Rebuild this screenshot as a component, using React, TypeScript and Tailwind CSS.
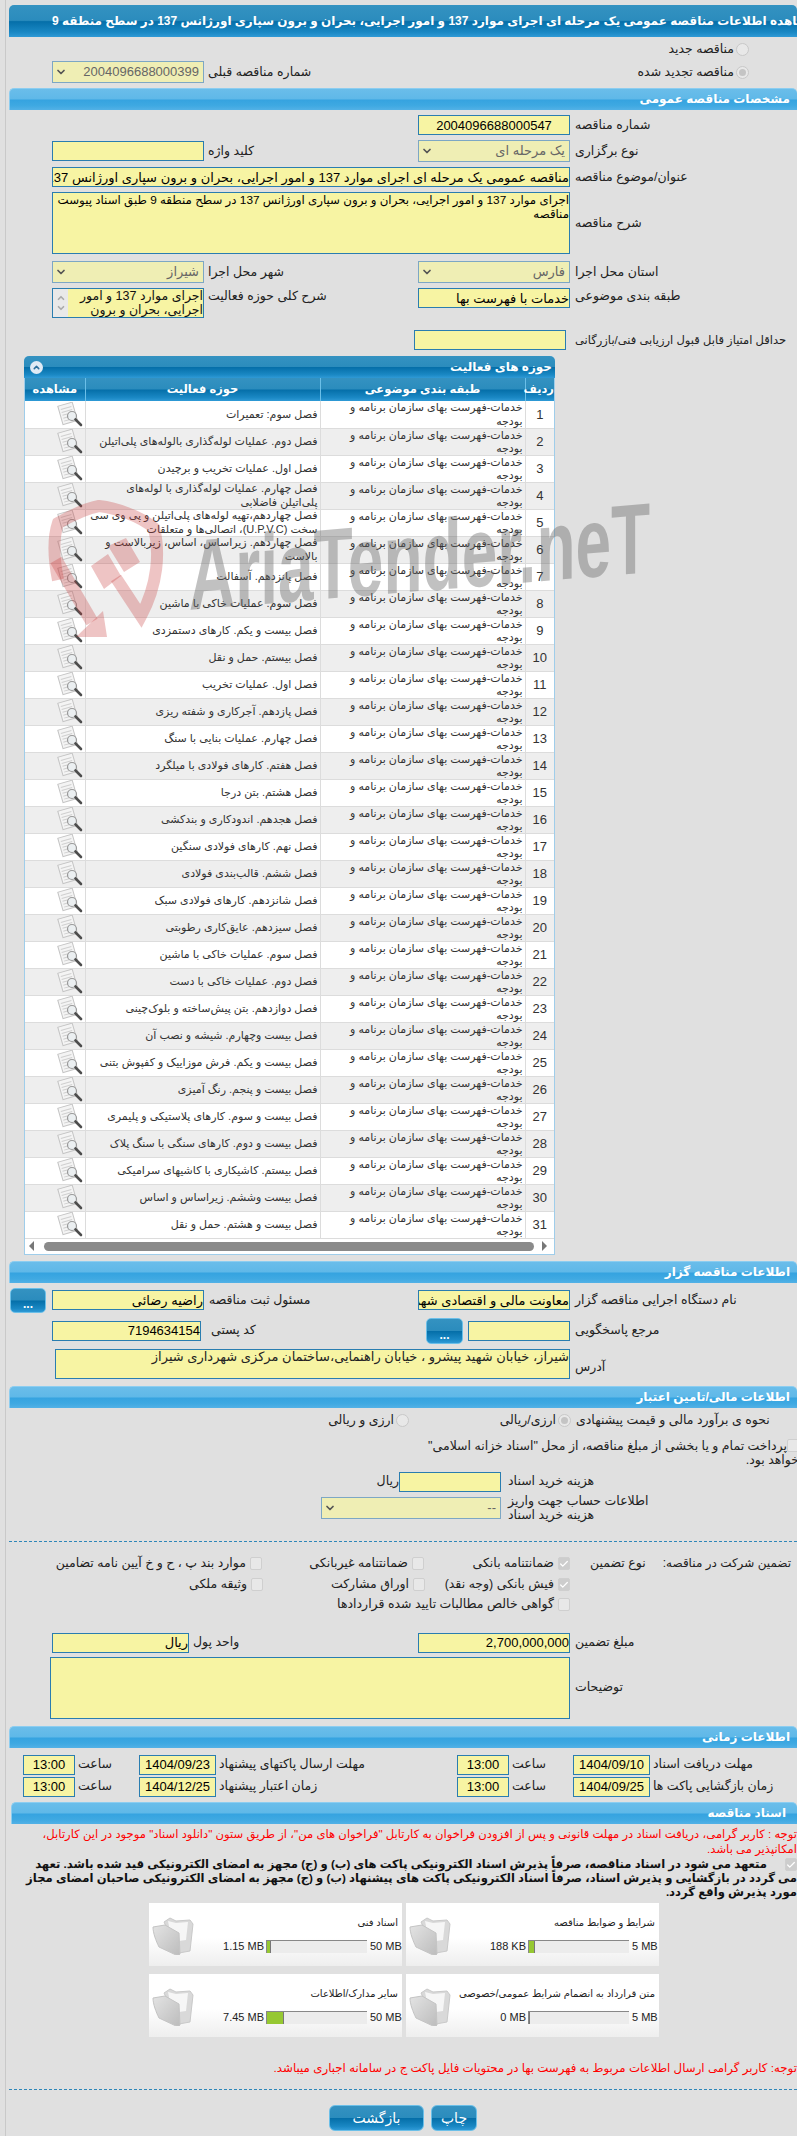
import React from "react";
import { ChevronDown, Check, ChevronUp } from "lucide-react";

const activities = [
  "فصل سوم: تعمیرات",
  "فصل دوم. عملیات لوله‌گذاری بالوله‌های پلی‌اتیلن",
  "فصل اول. عملیات تخریب و برچیدن",
  "فصل چهارم. عملیات لوله‌گذاری با لوله‌های پلی‌اتیلن فاضلابی",
  "فصل چهاردهم،تهیه لوله‌های پلی‌اتیلن و پی وی سی سخت (U.P.V.C)، اتصالی‌ها و متعلقات",
  "فصل چهاردهم. زیراساس، اساس، زیربالاست  و بالاست",
  "فصل پانزدهم. آسفالت",
  "فصل سوم. عملیات خاکی با ماشین",
  "فصل بیست و یکم. کارهای دستمزدی",
  "فصل بیستم. حمل و نقل",
  "فصل اول. عملیات تخریب",
  "فصل پازدهم. آجرکاری و شفته ریزی",
  "فصل چهارم. عملیات بنایی با سنگ",
  "فصل هفتم. کارهای فولادی با میلگرد",
  "فصل هشتم. بتن درجا",
  "فصل هجدهم. اندودکاری و بندکشی",
  "فصل نهم. کارهای فولادی سنگین",
  "فصل ششم. قالب‌بندی فولادی",
  "فصل شانزدهم. کارهای فولادی سبک",
  "فصل سیزدهم. عایق‌کاری رطوبتی",
  "فصل سوم. عملیات خاکی با ماشین",
  "فصل دوم. عملیات خاکی با دست",
  "فصل دوازدهم. بتن پیش‌ساخته و بلوک‌چینی",
  "فصل بیست وچهارم. شیشه و نصب آن",
  "فصل بیست و یکم. فرش موزاییک و کفپوش بتنی",
  "فصل بیست و پنجم. رنگ آمیزی",
  "فصل بیست و سوم. کارهای پلاستیکی و پلیمری",
  "فصل بیست و دوم. کارهای سنگی با سنگ پلاک",
  "فصل بیستم. کاشیکاری با کاشیهای سرامیکی",
  "فصل بیست وششم. زیراساس و اساس",
  "فصل بیست و هشتم. حمل و نقل",
];

const darkGrad =
  "bg-[linear-gradient(to_bottom,#3492c1_0%,#2b8cbd_48%,#056fa9_52%,#1a88c4_85%,#2f9ad6_100%)]";
const lightGrad =
  "bg-[linear-gradient(to_bottom,#6abdea_0%,#5fb8e8_48%,#35a3e0_52%,#3fa9e2_80%,#52b1e6_100%)]";

function Inp({ w, value = "", className = "" }: { w: string; value?: string; className?: string }) {
  return (
    <input
      readOnly
      dir="rtl"
      value={value}
      className={`${w} h-[20px] shrink-0 border border-[#2a7db0] bg-[#f7f4a3] px-0 text-[13px] leading-[18px] text-black outline-none ${className}`}
    />
  );
}

function Sel({ w, value }: { w: string; value: string }) {
  return (
    <div className={`${w} relative flex h-[22px] shrink-0 items-center justify-end border border-[#7da7c4] bg-[#efeeb4] pr-[4px] text-[13px] text-[#666]`}>
      <ChevronDown className="absolute left-[2px] top-[4px] text-[#555]" size={12} strokeWidth={3.5} />
      <span dir="rtl">{value}</span>
    </div>
  );
}

function Lbl({ children, className = "" }: { children: React.ReactNode; className?: string }) {
  return (
    <span dir="rtl" className={`whitespace-nowrap text-left text-[12.5px] leading-[15px] text-[#222] ${className}`}>
      {children}
    </span>
  );
}

function Radio({ on = false }: { on?: boolean }) {
  return (
    <span className="flex h-[13px] w-[13px] shrink-0 items-center justify-center rounded-full border border-[#c8c8c8] bg-[#e8e8e8]">
      {on && <span className="h-[7px] w-[7px] rounded-full bg-[#c4c4c4]" />}
    </span>
  );
}

function Cb({ on = false }: { on?: boolean }) {
  return (
    <span className={`flex h-[13px] w-[12px] shrink-0 items-center justify-center rounded-[2px] border border-[#cfcfcf] ${on ? "bg-[#cdcdcd]" : "bg-[#e8e8e8]"}`}>
      {on && <Check size={10} strokeWidth={3} className="text-white" />}
    </span>
  );
}

function Bar({ title, className = "ml-[3px]" }: { title: string; className?: string }) {
  return (
    <div className={`${className} ${lightGrad} flex h-[22px] justify-end rounded-t-[5px] border-l border-t border-[#8ccdf0] pr-[7px]`}>
      <span dir="rtl" className="text-[12px] font-bold leading-[21px] text-white">{title}</span>
    </div>
  );
}

function Dots({ className = "" }: { className?: string }) {
  return (
    <div className={`${darkGrad} flex w-[36px] shrink-0 items-end justify-center rounded-[5px] border border-[#6bbfe8] pb-[3px] text-[12px] font-bold leading-[10px] text-white ${className}`}>
      ...
    </div>
  );
}

function DocIcon() {
  return (
    <svg width="26" height="25" viewBox="0 0 26 25" className="block">
      <g transform="rotate(-16 10 11)">
        <rect x="3" y="2" width="15" height="19" fill="#f4f4f4" stroke="#c4c4c4" strokeWidth="1" />
        <path d="M5 6h11M5 9h11M5 12h7M5 15h6M5 18h8" stroke="#cfcfcf" strokeWidth="1" />
      </g>
      <circle cx="15" cy="14" r="4.5" fill="#e9eef0" fillOpacity="0.8" stroke="#999" strokeWidth="1.2" />
      <path d="M18.5 17.5L24 23" stroke="#4d4d4d" strokeWidth="2.6" strokeLinecap="round" />
    </svg>
  );
}

function Folder() {
  return (
    <svg width="42" height="38" viewBox="0 0 42 38" className="block shrink-0">
      <defs>
        <linearGradient id="fg" x1="0" y1="0" x2="1" y2="1">
          <stop offset="0" stopColor="#e4e4e4" />
          <stop offset="1" stopColor="#bcbcbc" />
        </linearGradient>
      </defs>
      <path d="M12 5L18 1l6 3 14-1 3 4-3 27-11 2z" fill="#d9d9d9" stroke="#c9c9c9" />
      <path d="M16 4l8 2 12-1-2 18-14 2z" fill="#f6f6f6" />
      <path d="M1 10l12-2 14 8 1 21-1 1-3 0L7 30C4 24 1 16 1 10z" fill="url(#fg)" stroke="#c4c4c4" />
    </svg>
  );
}

function Card({ title, size, max, fill, maxW }: { title: string; size: string; max: string; fill: number; maxW: string }) {
  return (
    <div className="flex h-[63px] bg-[linear-gradient(to_bottom,#ffffff_55%,#eeeeee_100%)] pl-[3px] pt-[14px]">
      <Folder />
      <div className="min-w-0 flex-1 pr-[4px]">
        <div dir="rtl" className="whitespace-nowrap text-[10px] leading-[12px] text-[#222]">{title}</div>
        <div className="mt-[11px] flex h-[13px] items-center justify-end">
          <span className="mr-[2px] whitespace-nowrap text-[11px] leading-[13px] text-[#222]">{size}</span>
          <div className="flex h-[13px] w-[101px] border-l border-t border-[#888] bg-[#ececec]">
            <div className="h-full bg-[#96c832]" style={{ width: fill }} />
            <div className="h-full w-px bg-[#777]" />
          </div>
          <span className={`ml-[3px] whitespace-nowrap text-[11px] leading-[13px] text-[#222] ${maxW}`}>{max}</span>
        </div>
      </div>
    </div>
  );
}

function TimeCell({ label, value, w, cell }: { label: string; value: string; w: string; cell: string }) {
  return (
    <div className={`${cell} flex shrink-0 items-center`}>
      <input readOnly value={value} className={`${w} h-[20px] border border-[#2a7db0] bg-[#f7f4a3] text-center text-[13px] text-black outline-none`} />
      <Lbl className="ml-[3px]">{label}</Lbl>
    </div>
  );
}

export default function App() {
  return (
    <div className="relative h-[2136px] w-[797px] overflow-hidden bg-[#e0e0e0] font-['Liberation_Sans','DejaVu_Sans',sans-serif]">
      <div className="ml-[5px] h-full border-l border-[#c9c9c9] pt-[5px]">
        {/* page title */}
        <div className={`${darkGrad} ml-[3px] flex h-[32px] items-center overflow-hidden rounded-t-[5px] pl-[43px]`}>
          <span dir="rtl" className="whitespace-nowrap text-[12px] font-bold text-white">
            مشاهده اطلاعات مناقصه عمومی یک مرحله ای اجرای موارد 137 و امور اجرایی، بحران و برون سپاری اورژانس 137 در سطح منطقه 9
          </span>
        </div>

        <div className="mt-[3px] flex h-[18px] items-center justify-end gap-[2px] pr-[48px]">
          <Lbl>مناقصه جدید</Lbl>
          <Radio />
        </div>
        <div className="mt-[3px] flex h-[22px] items-center pl-[46px] pr-[48px]">
          <Sel w="w-[152px]" value="2004096688000399" />
          <Lbl className="ml-[4px]">شماره مناقصه قبلی</Lbl>
          <div className="ml-auto flex items-center gap-[2px]">
            <Lbl>مناقصه تجدید شده</Lbl>
            <Radio on />
          </div>
        </div>

        <Bar title="مشخصات مناقصه عمومی" className="ml-[3px] mt-[5px]" />

        <div className="mt-[5px] flex h-[20px] items-center pl-[412px]">
          <Inp w="w-[152px]" value="2004096688000547" className="text-center" />
          <Lbl className="ml-[5px]">شماره مناقصه</Lbl>
        </div>
        <div className="mt-[5px] flex h-[22px] items-center pl-[46px]">
          <div className="flex w-[366px] items-center">
            <Inp w="w-[152px]" />
            <Lbl className="ml-[4px]">کلید واژه</Lbl>
          </div>
          <Sel w="w-[152px]" value="یک مرحله ای" />
          <Lbl className="ml-[5px]">نوع برگزاری</Lbl>
        </div>
        <div className="mt-[5px] flex h-[20px] items-center pl-[46px]">
          <Inp w="w-[518px]" value="مناقصه عمومی یک مرحله ای اجرای موارد 137 و امور اجرایی، بحران و برون سپاری اورژانس 137 در سطح منطقه 9" />
          <Lbl className="ml-[5px]">عنوان/موضوع مناقصه</Lbl>
        </div>
        <div className="mt-[5px] flex h-[62px] items-center pl-[46px]">
          <textarea
            readOnly
            dir="rtl"
            value="اجرای موارد 137 و امور اجرایی، بحران و برون سپاری اورژانس 137 در سطح منطقه 9 طبق اسناد پیوست مناقصه"
            className="h-[62px] w-[518px] resize-none border border-[#2a7db0] bg-[#f7f4a3] text-[11.8px] leading-[14px] text-black outline-none"
          />
          <Lbl className="ml-[5px]">شرح مناقصه</Lbl>
        </div>
        <div className="mt-[7px] flex h-[22px] items-center pl-[46px]">
          <div className="flex w-[366px] items-center">
            <Sel w="w-[152px]" value="شیراز" />
            <Lbl className="ml-[4px]">شهر محل اجرا</Lbl>
          </div>
          <Sel w="w-[152px]" value="فارس" />
          <Lbl className="ml-[5px]">استان محل اجرا</Lbl>
        </div>
        <div className="mt-[5px] flex h-[30px] items-start pl-[46px]">
          <div className="flex w-[366px] items-start">
            <div className="flex h-[30px] w-[152px] shrink-0 border border-[#2a7db0] bg-[#f7f4a3]">
              <div className="flex h-full w-[15px] flex-col items-center justify-center bg-[#e9e9e9] text-[#aaa]">
                <ChevronUp size={10} strokeWidth={4} />
                <ChevronDown size={10} strokeWidth={4} />
              </div>
              <div dir="rtl" className="flex-1 overflow-hidden text-[12.5px] leading-[14px] text-[#111]">
                اجرای موارد 137 و امور اجرایی، بحران و برون
              </div>
            </div>
            <Lbl className="ml-[4px] mt-[1px]">شرح کلی حوزه فعالیت</Lbl>
          </div>
          <Inp w="w-[152px]" value="خدمات با فهرست بها" />
          <Lbl className="ml-[5px] mt-[1px]">طبقه بندی موضوعی</Lbl>
        </div>
        <div className="mt-[12px] flex h-[20px] items-center pl-[408px]">
          <Inp w="w-[152px]" />
          <Lbl className="ml-[9px] !text-[11.5px]">حداقل امتیاز قابل قبول ارزیابی فنی/بازرگانی</Lbl>
        </div>

        {/* activities panel */}
        <div className="ml-[18px] mt-[6px] w-[531px] rounded-t-[5px] border-x border-b border-[#9fcdea] bg-white">
          <div className={`${darkGrad} -mx-px flex h-[22px] items-center justify-between rounded-t-[5px] pl-[6px] pr-[3px]`}>
            <span className="flex h-[13px] w-[13px] items-center justify-center rounded-full bg-[#dfeaf5]">
              <ChevronUp size={9} strokeWidth={4} className="text-[#2a6e9c]" />
            </span>
            <span dir="rtl" className="text-[12px] font-bold text-white">حوزه های فعالیت</span>
          </div>
          <table className="w-[529px] table-fixed border-collapse text-[11px] leading-[13.5px] text-[#333]" dir="rtl">
            <colgroup>
              <col className="w-[29px]" />
              <col className="w-[205px]" />
              <col className="w-[235px]" />
              <col className="w-[60px]" />
            </colgroup>
            <thead>
              <tr className={`${darkGrad} h-[23px] text-[11.5px] font-bold text-white`}>
                {["ردیف", "طبقه بندی موضوعی", "حوزه فعالیت", "مشاهده"].map((h) => (
                  <th key={h} className="whitespace-nowrap border-l border-[#6bbfe8] p-0 font-bold last:border-l-0">{h}</th>
                ))}
              </tr>
            </thead>
            <tbody>
              {activities.map((a, i) => (
                <tr key={i} className={`h-[27px] border-b border-[#dcdcdc] ${i % 2 ? "bg-[#eeeeee]" : "bg-white"}`}>
                  <td className="border-l border-[#dcdcdc] p-0 text-center text-[13px]">{i + 1}</td>
                  <td className="border-l border-[#dcdcdc] p-0 px-[2px]"><div className="h-[26px] overflow-visible">خدمات-فهرست بهای سازمان برنامه و بودجه</div></td>
                  <td className="border-l border-[#dcdcdc] p-0 px-[2px]"><div className="flex h-[26px] items-center overflow-visible">{a}</div></td>
                  <td className="p-0"><div className="flex justify-end pr-[1px]" dir="ltr"><div className="mr-[1px]"><DocIcon /></div></div></td>
                </tr>
              ))}
            </tbody>
          </table>
          <div className="flex h-[15px] items-center px-[4px]">
            <span className="h-0 w-0 border-y-[5px] border-r-[5px] border-y-transparent border-r-[#777]" />
            <span className="ml-[10px] h-[9px] w-[490px] rounded-full bg-[#8a8a8a]" />
            <span className="ml-[8px] h-0 w-0 border-y-[5px] border-l-[5px] border-y-transparent border-l-[#777]" />
          </div>
        </div>

        <Bar title="اطلاعات مناقصه گزار" className="ml-[3px] mt-[6px]" />

        <div className="mt-[5px] flex h-[25px] items-center pl-[4px]">
          <Dots className="h-[25px]" />
          <div className="ml-[6px] flex w-[366px] items-center">
            <Inp w="w-[152px]" value="راضیه رضائی" />
            <Lbl className="ml-[5px]">مسئول ثبت مناقصه</Lbl>
          </div>
          <Inp w="w-[152px]" value="معاونت مالی و اقتصادی شهرداری شیراز" />
          <Lbl className="ml-[5px]">نام دستگاه اجرایی مناقصه گزار</Lbl>
        </div>
        <div className="mt-[5px] flex h-[26px] items-center pl-[46px]">
          <div className="flex w-[374px] items-center">
            <Inp w="w-[149px]" value="7194634154" />
            <Lbl className="ml-[10px]">کد پستی</Lbl>
          </div>
          <Dots className="h-[26px] w-[37px]" />
          <Inp w="w-[102px]" className="ml-[5px]" />
          <Lbl className="ml-[5px]">مرجع پاسخگویی</Lbl>
        </div>
        <div className="mt-[5px] flex h-[30px] items-center pl-[49px]">
          <textarea
            readOnly
            dir="rtl"
            value="شیراز، خیابان شهید پیشرو ، خیابان راهنمایی،ساختمان مرکزی شهرداری شیراز"
            className="h-[30px] w-[515px] resize-none border border-[#2a7db0] bg-[#f7f4a3] text-[13px] leading-[14px] text-[#222] outline-none"
          />
          <Lbl className="ml-[5px] mt-[7px]">آدرس</Lbl>
        </div>

        <Bar title="اطلاعات مالی/تامین اعتبار" className="ml-[3px] mt-[7px]" />

        <div className="mt-[4px] flex h-[18px] items-center pl-[327px]">
          <Lbl className="w-[61px]">ارزی و ریالی</Lbl>
          <span className="ml-[2px]"><Radio /></span>
          <Lbl className="ml-[93px] w-[54px]">ارزی/ریالی</Lbl>
          <span className="ml-[2px]"><Radio on /></span>
          <Lbl className="ml-[5px]">نحوه ی برآورد مالی و قیمت پیشنهادی</Lbl>
        </div>
        <div dir="rtl" className="ml-[294px] mt-[9px] w-[499px] text-[12.5px] leading-[14px] text-[#222]">
          <span className="inline-block align-[-2px]"><Cb /></span>
          پرداخت تمام و یا بخشی از مبلغ مناقصه، از محل "اسناد خزانه اسلامی"
          <br />
          خواهد بود.
        </div>
        <div className="mt-[5px] flex h-[20px] items-center pl-[374px]">
          <Lbl className="w-[19px]">ریال</Lbl>
          <Inp w="w-[102px]" />
          <Lbl className="ml-[7px]">هزینه خرید اسناد</Lbl>
        </div>
        <div className="mt-[5px] flex h-[22px] items-center pl-[315px]">
          <Sel w="w-[180px]" value="--" />
          <span dir="rtl" className="ml-[7px] w-[170px] text-left text-[12.5px] leading-[14px] text-[#222]">اطلاعات حساب جهت واریز هزینه خرید اسناد</span>
        </div>

        <div className="ml-[3px] mt-[22px] border-t border-dashed border-[#2e86b8]" />

        <div className="mt-[14px] flex h-[16px] items-center pl-[54px]">
          <div className="flex w-[202px] items-center justify-end gap-[4px]"><Lbl>موارد بند پ ، ح و خ آیین نامه تضامین</Lbl><Cb /></div>
          <div className="flex w-[162px] items-center justify-end gap-[4px]"><Lbl>ضمانتنامه غیربانکی</Lbl><Cb /></div>
          <div className="flex w-[146px] items-center justify-end gap-[4px]"><Lbl>ضمانتنامه بانکی</Lbl><Cb on /></div>
          <Lbl className="ml-[20px]">نوع تضمین</Lbl>
          <Lbl className="ml-[17px] !text-[12px]">تضمین شرکت در مناقصه:</Lbl>
        </div>
        <div className="mt-[5px] flex h-[16px] items-center pl-[54px]">
          <div className="flex w-[203px] items-center justify-end gap-[4px]"><Lbl>وثیقه ملکی</Lbl><Cb /></div>
          <div className="flex w-[162px] items-center justify-end gap-[4px]"><Lbl>اوراق مشارکت</Lbl><Cb /></div>
          <div className="flex w-[145px] items-center justify-end gap-[4px]"><Lbl>فیش بانکی (وجه نقد)</Lbl><Cb on /></div>
        </div>
        <div className="mt-[4px] flex h-[16px] items-center pl-[252px]">
          <div className="flex w-[312px] items-center justify-end gap-[4px]"><Lbl>گواهی خالص مطالبات تایید شده قراردادها</Lbl><Cb /></div>
        </div>

        <div className="mt-[20px] flex h-[20px] items-center pl-[46px]">
          <div className="flex w-[366px] items-center">
            <Inp w="w-[137px]" value="ریال" />
            <Lbl className="ml-[4px]">واحد پول</Lbl>
          </div>
          <Inp w="w-[152px]" value="2,700,000,000" />
          <Lbl className="ml-[5px]">مبلغ تضمین</Lbl>
        </div>
        <div className="mt-[4px] flex h-[62px] items-center pl-[44px]">
          <textarea readOnly className="h-[62px] w-[520px] resize-none border border-[#2a7db0] bg-[#f7f4a3] outline-none" />
          <Lbl className="ml-[5px]">توضیحات</Lbl>
        </div>

        <Bar title="اطلاعات زمانی" className="ml-[3px] mt-[7px]" />

        <div className="mt-[7px] flex h-[20px] pl-[17px]">
          <TimeCell cell="w-[116px]" w="w-[52px]" label="ساعت" value="13:00" />
          <TimeCell cell="w-[318px]" w="w-[77px]" label="مهلت ارسال پاکتهای پیشنهاد" value="1404/09/23" />
          <TimeCell cell="w-[116px]" w="w-[52px]" label="ساعت" value="13:00" />
          <TimeCell cell="w-[200px]" w="w-[77px]" label="مهلت دریافت اسناد" value="1404/09/10" />
        </div>
        <div className="mt-[2px] flex h-[20px] pl-[17px]">
          <TimeCell cell="w-[116px]" w="w-[52px]" label="ساعت" value="13:00" />
          <TimeCell cell="w-[318px]" w="w-[77px]" label="زمان اعتبار پیشنهاد" value="1404/12/25" />
          <TimeCell cell="w-[116px]" w="w-[52px]" label="ساعت" value="13:00" />
          <TimeCell cell="w-[200px]" w="w-[77px]" label="زمان بازگشایی پاکت ها" value="1404/09/25" />
        </div>

        <Bar title="اسناد مناقصه" className="ml-[5px] mt-[5px] !pr-[11px]" />

        <div dir="rtl" className="ml-[20px] mt-[2px] w-[771px] whitespace-nowrap text-[11.6px] leading-[15px] text-[#f00]">
          توجه : کاربر گرامی، دریافت اسناد در مهلت قانونی و پس از افزودن فراخوان به کارتابل "فراخوان های من"، از طریق ستون "دانلود اسناد" موجود در این کارتابل،
          <br />
          امکانپذیر می باشد.
        </div>
        <div dir="rtl" className="ml-[4px] mt-[1px] w-[787px] whitespace-nowrap text-[11.6px] font-bold leading-[14px] text-[#111]">
          <span className="ml-[18px] inline-block align-[-2px]"><Cb on /></span>
          متعهد می شود در اسناد مناقصه، صرفاً پذیرش اسناد الکترونیکی پاکت های (ب) و (ج) مجهز به امضای الکترونیکی قید شده باشد. تعهد
          <br />
          می گردد در بازگشایی و پذیرش اسناد، صرفاً اسناد الکترونیکی پاکت های پیشنهاد (ب) و (ج) مجهز به امضای الکترونیکی صاحبان امضای مجاز
          <br />
          مورد پذیرش واقع گردد.
        </div>

        <div className="ml-[143px] mt-[4px] grid w-[510px] grid-cols-2 gap-x-[4px] gap-y-[8px]">
          <Card title="اسناد فنی" size="1.15 MB" max="50 MB" fill={3} maxW="w-[28px]" />
          <Card title="شرایط و ضوابط مناقصه" size="188 KB" max="5 MB" fill={5} maxW="w-[23px]" />
          <Card title="سایر مدارک/اطلاعات" size="7.45 MB" max="50 MB" fill={16} maxW="w-[28px]" />
          <Card title="متن قرارداد به انضمام شرایط عمومی/خصوصی" size="0 MB" max="5 MB" fill={0} maxW="w-[23px]" />
        </div>

        <div dir="rtl" className="ml-[260px] mt-[24px] w-[531px] whitespace-nowrap text-[11.8px] leading-[14px] text-[#f00]">
          توجه: کاربر گرامی ارسال اطلاعات مربوط به فهرست بها در محتویات فایل پاکت ج در سامانه اجباری میباشد.
        </div>

        <div className="ml-[3px] mt-[14px] border-t border-dashed border-[#2e86b8]" />

        <div className="mt-[15px] flex h-[26px] pl-[323px]">
          <button className={`${darkGrad} h-[26px] w-[95px] rounded-[6px] border border-[#6bbfe8] text-[14px] text-white`}>بازگشت</button>
          <button className={`${darkGrad} ml-[7px] h-[26px] w-[46px] rounded-[6px] border border-[#6bbfe8] text-[14px] text-white`}>چاپ</button>
        </div>
      </div>

      {/* watermark over the activities table */}
      <div className="pointer-events-none absolute left-[45px] top-[495px] h-[150px] w-[620px]">
        <svg width="130" height="145" viewBox="45 495 130 145" className="absolute left-0 top-0">
          <g fill="none" stroke="#c83c3c" strokeOpacity="0.3" strokeWidth="12">
            <path d="M58 580C53 555 54 535 58 523 74 514 88 508 99 506 116 508 140 516 154 528 160 552 158 584 141 616L116 578" />
            <path d="M56 560L92 622" strokeWidth="13" />
          </g>
          <path d="M107 637L76 637 103 611z" fill="#c83c3c" fillOpacity="0.3" />
          <path d="M91 566L108 554 121 576 104 589zM108 546L126 538 140 562 124 572z" fill="#c83c3c" fillOpacity="0.3" />
        </svg>
        <div
          dir="ltr"
          className="absolute left-[144px] top-[30px] origin-left whitespace-nowrap text-[100px] font-bold leading-[100px] text-[#666] opacity-40 [transform:scaleX(0.64)_skewY(-3deg)]"
        >
          AriaTender.neT
        </div>
      </div>
    </div>
  );
}
